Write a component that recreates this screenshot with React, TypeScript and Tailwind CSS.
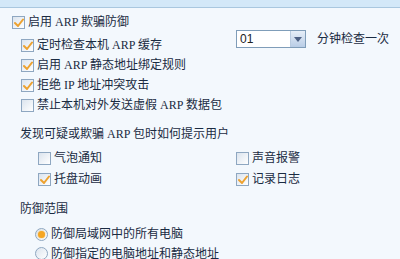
import React from "react";

const font = { fontFamily: '"Liberation Serif", "Noto Sans CJK SC", serif' };

const Check = ({ checked }: { checked?: boolean }) => (
  <span className="relative inline-block w-[13px] h-[13px] shrink-0 border border-[#8ea7c1] bg-gradient-to-br from-[#dbe4ee] to-white">
    {checked && (
      <svg
        className="absolute left-[1px] top-[1px]"
        width="10"
        height="10"
        viewBox="0 0 10 10"
      >
        <path
          d="M1 5 L4 8 L9 1.5"
          fill="none"
          stroke="#eda230"
          strokeWidth="2"
          strokeLinecap="round"
          strokeLinejoin="round"
        />
      </svg>
    )}
  </span>
);

const Radio = ({ checked }: { checked?: boolean }) => (
  <span className="relative inline-flex items-center justify-center w-[13px] h-[13px] shrink-0 rounded-full border border-[#8ea7c1] bg-gradient-to-br from-[#dbe4ee] to-white">
    {checked && (
      <span className="w-[7px] h-[7px] rounded-full bg-[#f5a623] shadow-[0_0_2px_#f8c060]" />
    )}
  </span>
);

const CheckRow = ({
  checked,
  label,
  className = "",
}: {
  checked?: boolean;
  label: React.ReactNode;
  className?: string;
}) => (
  <div className={`flex items-center gap-[3px] h-[20px] ${className}`}>
    <Check checked={checked} />
    <span className="whitespace-pre">{label}</span>
  </div>
);

export default function App() {
  return (
    <div
      className="w-[400px] h-[259px] overflow-hidden bg-[#f3f8fd] text-[12px] leading-none text-[#1a2b42]"
      style={font}
    >
      <div className="h-[8px] bg-[#d3e8f8] border-b border-[#a9c7df]" />

      <CheckRow checked label="启用 ARP 欺骗防御" className="mt-[4px] pl-[12px]" />

      <div className="flex items-start pl-[21px] mt-[3px]">
        <CheckRow checked label="定时检查本机 ARP 缓存" />
        <div className="flex items-center ml-auto mr-[11px] -mt-[5px]">
          <div className="flex w-[70px] h-[18px] border border-[#7f9db9] bg-white">
            <span className="flex-1 flex items-center pl-[3px] font-['Liberation_Sans'] text-[12px] text-[#222]">
              01
            </span>
            <span className="flex items-center justify-center w-[15px] h-full border-l border-[#b9cbe0] bg-gradient-to-b from-[#e6eef8] to-[#b9cde6]">
              <svg width="8" height="5" viewBox="0 0 8 5">
                <path d="M0 0 H8 L4 5 Z" fill="#4d6185" />
              </svg>
            </span>
          </div>
          <span className="ml-[11px]">分钟检查一次</span>
        </div>
      </div>

      <CheckRow checked label="启用 ARP 静态地址绑定规则" className="pl-[21px]" />
      <CheckRow checked label="拒绝 IP 地址冲突攻击" className="pl-[21px]" />
      <CheckRow label="禁止本机对外发送虚假 ARP 数据包" className="pl-[21px]" />

      <div className="flex items-center h-[20px] mt-[9px] pl-[20px] whitespace-pre">
        发现可疑或欺骗 ARP 包时如何提示用户
      </div>

      <div className="grid grid-cols-[198px_1fr] pl-[38px] mt-[4px] gap-y-[1px]">
        <CheckRow label="气泡通知" />
        <CheckRow label="声音报警" />
        <CheckRow checked label="托盘动画" />
        <CheckRow checked label="记录日志" />
      </div>

      <div className="flex items-center h-[20px] mt-[10px] pl-[20px]">防御范围</div>

      <div className="flex items-center gap-[3px] h-[20px] mt-[5px] pl-[35px]">
        <Radio checked />
        <span>防御局域网中的所有电脑</span>
      </div>
      <div className="flex items-center gap-[3px] h-[19px] pl-[35px]">
        <Radio />
        <span>防御指定的电脑地址和静态地址</span>
      </div>
    </div>
  );
}
